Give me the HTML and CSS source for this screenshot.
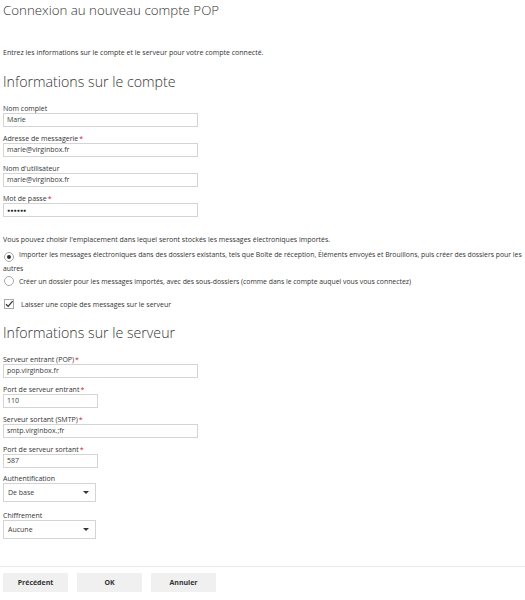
FILE: index.html
```html
<!DOCTYPE html>
<html lang="fr">
<head>
<meta charset="utf-8">
<link rel="stylesheet" href="styles.css">
</head>
<body>
<div class="page">
  <h1 class="title">Connexion au nouveau compte POP</h1>
  <p class="intro">Entrez les informations sur le compte et le serveur pour votre compte connecté.</p>

  <h2 class="section">Informations sur le compte</h2>
  <div class="field">
    <div class="label">Nom complet</div>
    <div class="input wide">Marie</div>
  </div>
  <div class="field">
    <div class="label">Adresse de messagerie<span class="req">*</span></div>
    <div class="input wide">marie@virginbox.fr</div>
  </div>
  <div class="field">
    <div class="label">Nom d'utilisateur</div>
    <div class="input wide">marie@virginbox.fr</div>
  </div>
  <div class="field">
    <div class="label">Mot de passe<span class="req">*</span></div>
    <div class="input wide pwd">●●●●●●</div>
  </div>

  <p class="choice-intro">Vous pouvez choisir l'emplacement dans lequel seront stockés les messages électroniques importés.</p>
  <p class="radio-row first"><span class="radio checked"></span>Importer les messages électroniques dans des dossiers existants, tels que Boîte de réception, Éléments envoyés et Brouillons, puis créer des dossiers pour les autres</p>
  <p class="radio-row"><span class="radio"></span>Créer un dossier pour les messages importés, avec des sous-dossiers (comme dans le compte auquel vous vous connectez)</p>
  <p class="check-row"><span class="checkbox"><svg width="10" height="10" viewBox="0 0 10 10"><path d="M2 5.2 L4.2 7.4 L8.6 2.2" fill="none" stroke="#333" stroke-width="1.3"/></svg></span>Laisser une copie des messages sur le serveur</p>

  <h2 class="section server">Informations sur le serveur</h2>
  <div class="field">
    <div class="label">Serveur entrant (POP)<span class="req">*</span></div>
    <div class="input wide">pop.virginbox.fr</div>
  </div>
  <div class="field">
    <div class="label">Port de serveur entrant<span class="req">*</span></div>
    <div class="input narrow">110</div>
  </div>
  <div class="field">
    <div class="label">Serveur sortant (SMTP)<span class="req">*</span></div>
    <div class="input wide">smtp.virginbox.;fr</div>
  </div>
  <div class="field">
    <div class="label">Port de serveur sortant<span class="req">*</span></div>
    <div class="input narrow">587</div>
  </div>
  <div class="field sel-first">
    <div class="label">Authentification</div>
    <div class="select"><span>De base</span><span class="caret"></span></div>
  </div>
  <div class="field sel-second">
    <div class="label">Chiffrement</div>
    <div class="select"><span>Aucune</span><span class="caret"></span></div>
  </div>

  <div class="footer">
    <button class="btn">Précédent</button>
    <button class="btn">OK</button>
    <button class="btn">Annuler</button>
  </div>
</div>
</body>
</html>
```

FILE: styles.css
```css
* { box-sizing: border-box; }
html, body { margin: 0; padding: 0; background: #fff; }
body {
  font-family: "Open Sans", "Noto Sans", sans-serif;
  color: #333;
  width: 525px;
  height: 600px;
  overflow: hidden;
}
.page { padding: 0 0 0 3px; }
.title {
  font-weight: 300;
  font-size: 13.3px;
  line-height: 20px;
  margin: 0;
  color: #333;
}
.intro {
  font-size: 7px;
  line-height: 10px;
  margin: 28px 0 0 0;
}
.section {
  font-weight: 300;
  font-size: 14.2px;
  line-height: 20px;
  margin: 14px 0 0 0;
  color: #333;
}
.section.server { margin-top: 12px; }
.field { margin-top: 7px; }
.section + .field { margin-top: 12px; }
.label {
  font-size: 7px;
  line-height: 9px;
}
.req { color: #c4262e; margin-left: 1px; }
.input {
  height: 14px;
  border: 1px solid #d4d4d4;
  font-size: 7px;
  line-height: 12px;
  padding-left: 3px;
  color: #3a3a3a;
}
.input.wide { width: 195px; }
.input.narrow { width: 95px; }
.input.pwd { font-size: 5px; letter-spacing: 0.2px; color: #222; }
.choice-intro {
  font-size: 7px;
  line-height: 10px;
  margin: 18px 0 0 0;
}
.radio-row, .check-row {
  font-size: 7px;
  line-height: 13px;
  margin: 0;
}
.radio-row { font-size: 6.85px; }
.radio-row.first { margin-top: 3px; }
.radio {
  display: inline-flex;
  vertical-align: -2px;
  width: 10px; height: 10px;
  border: 1px solid #a8a8a8;
  border-radius: 50%;
  align-items: center;
  justify-content: center;
  margin: 0 5px 0 1px;
}
.radio.checked::after {
  content: "";
  width: 4px; height: 4px;
  background: #333;
  border-radius: 50%;
}
.check-row { margin-top: 10px; }
.checkbox {
  display: inline-flex;
  vertical-align: -2px;
  width: 10px; height: 10px;
  border: 1px solid #a8a8a8;
  margin: 0 7px 0 1px;
}
.checkbox svg { margin: -1px 0 0 -1px; flex: none; }
.sel-first { margin-top: 6px; }
.sel-second { margin-top: 9px; }
.select {
  width: 93px;
  height: 19px;
  border: 1px solid #d4d4d4;
  display: flex;
  align-items: center;
  justify-content: space-between;
  padding: 0 6px 0 4px;
  font-size: 7px;
  color: #3a3a3a;
}
.caret {
  width: 0; height: 0;
  border-left: 3px solid transparent;
  border-right: 3px solid transparent;
  border-top: 3px solid #333;
}
.footer {
  margin: 27px 0 0 -3px;
  border-top: 1px solid #ececec;
  padding: 6px 0 0 3px;
  display: flex;
  gap: 9px;
}
.btn {
  width: 65px;
  height: 19px;
  border: 0;
  background: #f0f0f0;
  font-family: "Open Sans", sans-serif;
  font-weight: 700;
  font-size: 7px;
  color: #333;
  padding: 0;
}
```
